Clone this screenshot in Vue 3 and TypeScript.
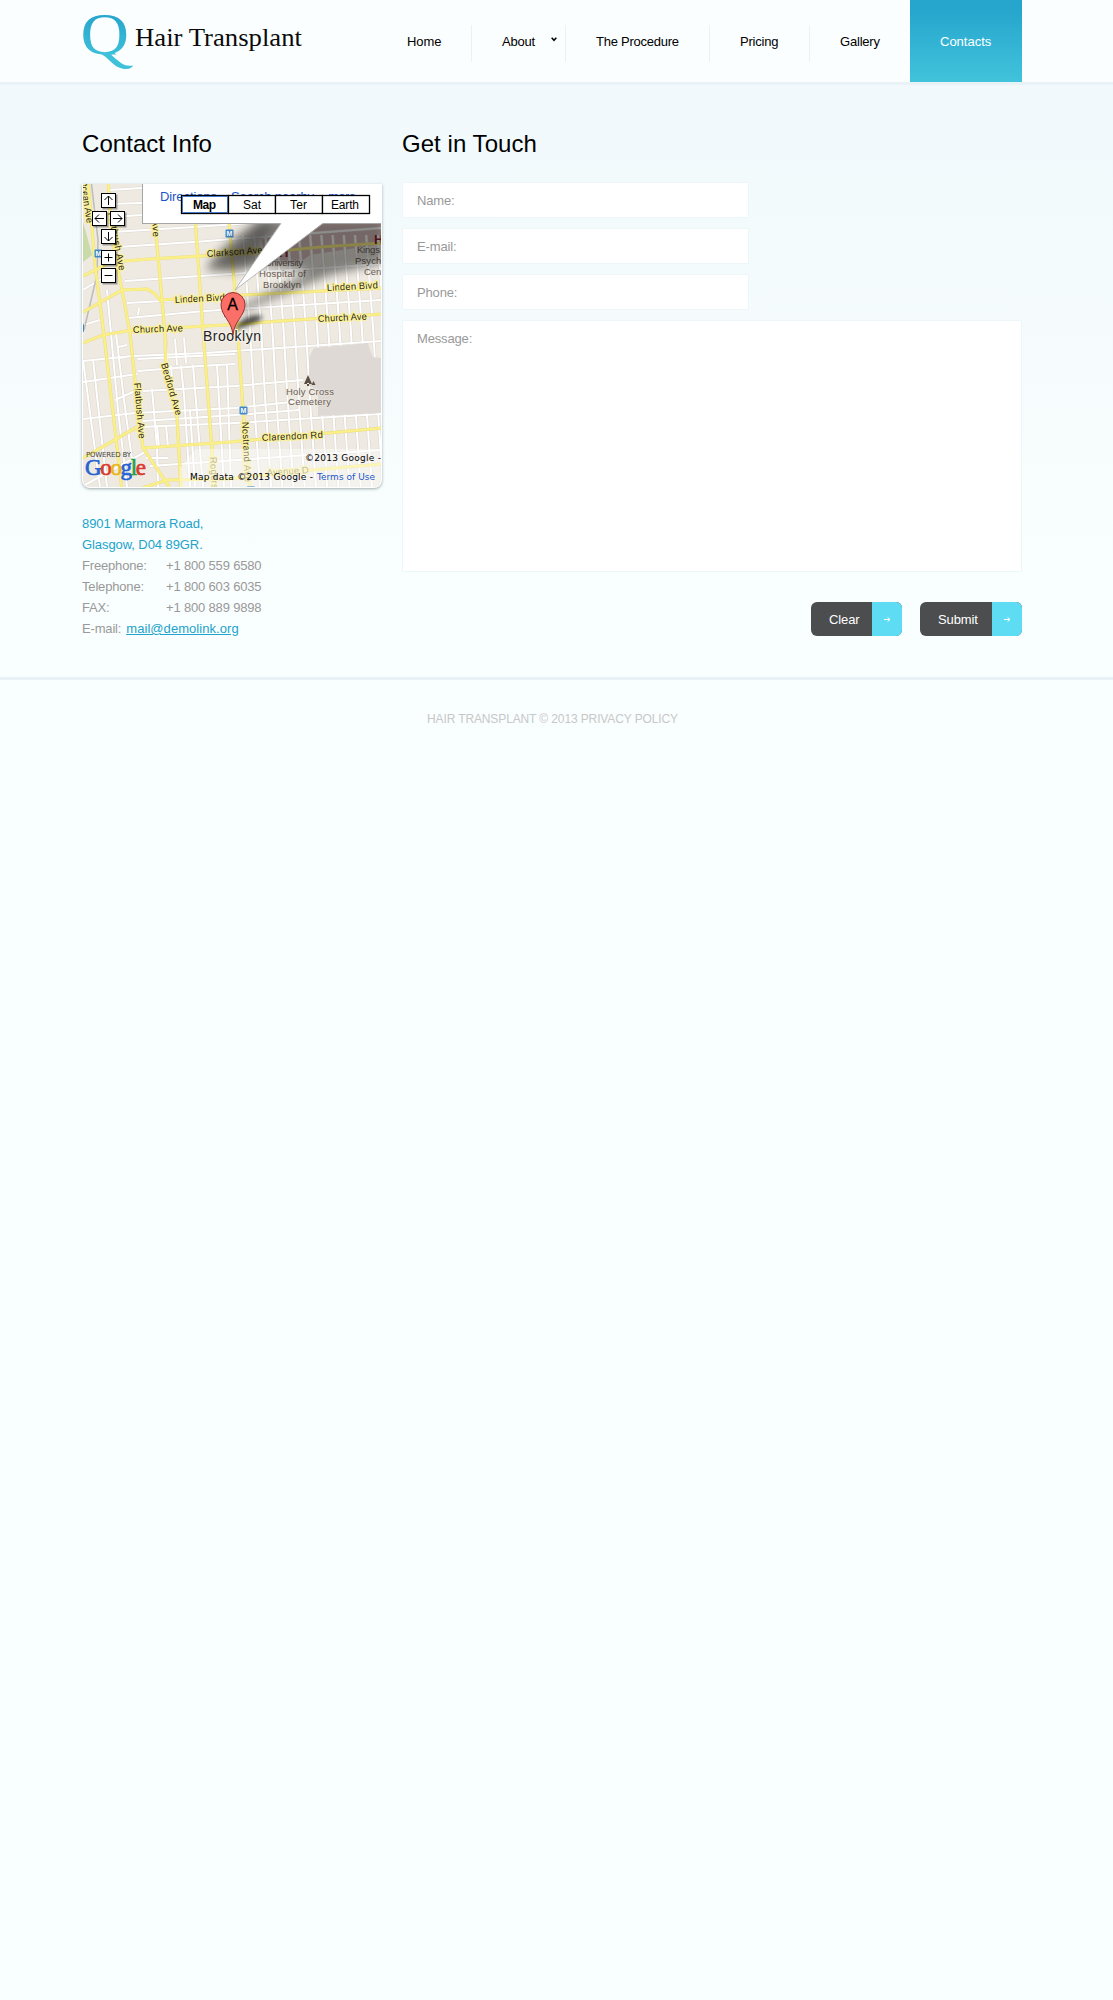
<script setup lang="ts">
interface NavItem { label: string; cls: string; arrow?: boolean }
interface Road { d: string }
interface Label { t: string; x: number; y: number; w: number; r?: number; cls?: string }

const nav: NavItem[] = [
  { label: 'Home', cls: 'home' },
  { label: 'About', cls: 'about', arrow: true },
  { label: 'The Procedure', cls: 'procedure' },
  { label: 'Pricing', cls: 'pricing' },
  { label: 'Gallery', cls: 'gallery' },
  { label: 'Contacts', cls: 'contacts' },
]
const phones = [
  ['Freephone:', '+1 800 559 6580'],
  ['Telephone:', '+1 800 603 6035'],
  ['FAX:', '+1 800 889 9898'],
]
const fields = ['Name:', 'E-mail:', 'Phone:']

const mainRoads: Road[] = [
  { d: 'M88 180L95 265L104 335L122 490' },
  { d: 'M108 180L112 240L122 290L130 333L137 400L143 448L170 488' },
  { d: 'M153 200L157 245L162 300L165 335L166 373L177 417L181 488' },
  { d: 'M193 188L203 330L213 463L215 490' },
  { d: 'M226 190L229 222L235 292L239 350L243 410L250 488' },
  { d: 'M83 276L112 262L150 259L270 252L320 247L382 243' },
  { d: 'M83 312L122 290L147 289L154 293L160 300L225 296L382 288' },
  { d: 'M83 343L103 335L133 330L225 325L382 314' },
  { d: 'M143 448L230 442L382 428' },
  { d: 'M83 458L137 427' },
  { d: 'M142 488L167 480L228 479L300 471L382 464' },
]
const sideRoads: Road[] = [
  'M108 190L142 188', 'M108 204L142 203', 'M112 217L142 215', 'M112 232L194 227L381 214', 'M118 247L194 242L381 228',
  'M125 281L200 276L381 264', 'M128 318L205 311L381 300', 'M127 303L200 299', 'M83 361L132 356L205 353L381 341',
  'M83 382L137 374', 'M138 359L235 354', 'M138 371L200 366L235 364', 'M115 400L135 391', 'M143 391L235 386L303 380',
  'M83 419L135 413L235 408L310 400', 'M143 421L235 415L300 410', 'M140 427L235 423L381 414', 'M83 486L145 452',
  'M146 458H168', 'M150 466L381 450', 'M83 290L108 275', 'M83 325L100 320',
  'M93 359L107 487', 'M83 360L95 450L100 487', 'M107 290L118 410L127 487', 'M116 333L124 400L132 460',
  'M118 347L127 345', 'M120 358L127 357', 'M139 308L138 315', 'M152 389L157 447L158 487', 'M166 340L167 366',
  'M175 339L177 365', 'M184 338L186 363', 'M171 366L173 391', 'M181 366L184 395L190 487', 'M190 410L195 487',
  'M157 425L159 447', 'M166 425L168 447', 'M193 365L203 487', 'M217 365L224 487', 'M227 365L231 487',
].map(d => ({ d }))
// Parallel blocks east of Nostrand Avenue
const eastRoads: Road[] = Array.from({ length: 13 }, (_, i) => {
  const x = 250 + i * 11.2
  return { d: `M${x - 7} 235L${x} 330L${x + 4} 400L${x + 10} 488` }
})
const labels: Label[] = [
  { t: 'Clarkson Ave', x: 207, y: 257, w: 56, r: -4 },
  { t: 'Linden Blvd', x: 175, y: 303, w: 50, r: -3 },
  { t: 'Linden Blvd', x: 327, y: 291, w: 51, r: -3 },
  { t: 'Church Ave', x: 133, y: 333, w: 50, r: -2 },
  { t: 'Church Ave', x: 318, y: 322, w: 49, r: -3 },
  { t: 'Clarendon Rd', x: 262, y: 441, w: 61, r: -3 },
  { t: 'Avenue D', x: 267, y: 476, w: 42, r: -4, cls: 'faded' },
  { t: 'Bedford Ave', x: 161, y: 364, w: 54, r: 74 },
  { t: 'Flatbush Ave', x: 134, y: 383, w: 56, r: 85 },
  { t: 'Nostrand', x: 242, y: 422, w: 40, r: 87 },
  { t: 'Ave', x: 244, y: 465, w: 17, r: 87, cls: 'faded' },
  { t: 'Rogers', x: 210, y: 457, w: 32, r: 87, cls: 'faded' },
  { t: 'Ave', x: 152, y: 220, w: 17, r: 86 },
  { t: 'Flatbush Ave', x: 108, y: 213, w: 59, r: 79 },
  { t: 'Ocean Ave', x: 80, y: 180, w: 44, r: 81 },
]
const places: Label[] = [
  { t: 'University', x: 265, y: 266, w: 38 }, { t: 'Hospital of', x: 259, y: 277, w: 47 }, { t: 'Brooklyn', x: 263, y: 288, w: 38 },
  { t: 'Kings C', x: 357, y: 253, w: 32 }, { t: 'Psychia', x: 355, y: 264, w: 34 }, { t: 'Cente', x: 364, y: 275, w: 25 },
  { t: 'Holy Cross', x: 286, y: 395, w: 48 }, { t: 'Cemetery', x: 288, y: 405, w: 43 },
]
const metros = [[225.500, 229.500], [239.500, 406.500], [94.500, 249.500], [76, 324], [224, 309], [247, 486]]
const types = [
  { t: 'Map', x: 181, w: 47, tx: 193, tw: 23 }, { t: 'Sat', x: 228, w: 47, tx: 243, tw: 18 },
  { t: 'Ter', x: 275, w: 47, tx: 290, tw: 17 }, { t: 'Earth', x: 322, w: 47, tx: 331, tw: 28 },
]
const controls = [
  { x: 101, y: 193, d: 'M8 12.5V3.5M4 7.5L8 3.5L12 7.5' },
  { x: 92, y: 211, d: 'M12.5 8H3.5M7.5 4L3.5 8L7.5 12' },
  { x: 110, y: 211, d: 'M3.5 8H12.5M8.5 4L12.5 8L8.5 12' },
  { x: 101, y: 229, d: 'M8 3.5V12.5M4 8.5L8 12.5L12 8.5' },
  { x: 101, y: 250, d: 'M8 4V12M4 8H12' },
  { x: 101, y: 268, d: 'M4 8H12' },
]
</script>

<template>
  <div class="page">
    <header class="header">
      <div class="wrap bar">
        <svg class="logo" width="225" height="72" viewBox="82 0 225 72">
          <defs>
            <linearGradient id="lg" gradientUnits="userSpaceOnUse" x1="0" y1="-40" x2="0" y2="15">
              <stop offset="0" stop-color="#27a5cc" /><stop offset="1" stop-color="#43c8dd" />
            </linearGradient>
            <clipPath id="bowl"><rect x="80" y="10" width="60" height="44.5" /></clipPath>
          </defs>
          <g clip-path="url(#bowl)"><text class="mark" transform="translate(80.6 54) scale(1.12 1)" x="0" y="0" fill="url(#lg)">Q</text></g>
          <path fill="#3fc1da" d="M97 53C103 54 106 57 110 61C116 67 121 69 126 69C130 69 132 67.500 133 65.500C129 66 125 66 121 63C116 59 113 57 110 53Z" />
          <text class="brand" x="135" y="46" textLength="167" lengthAdjust="spacingAndGlyphs">Hair Transplant</text>
        </svg>
        <nav class="nav">
          <a v-for="n in nav" :key="n.label" :class="['item', n.cls]">
            <span>{{ n.label }}</span>
            <svg v-if="n.arrow" class="caret" width="6" height="5" viewBox="0 0 6 5"><path d="M.7 .8L3 3.300L5.300 .8" fill="none" stroke="#000" stroke-width="1.6" /></svg>
          </a>
        </nav>
      </div>
    </header>

    <main class="wrap main">
      <section class="info">
        <h2>Contact Info</h2>
        <div class="map">
          <svg width="298" height="303" viewBox="83 184 298 303">
            <defs>
              <filter id="soft" x="-30%" y="-30%" width="160%" height="160%"><feGaussianBlur stdDeviation="5" /></filter>
              <filter id="soft2" x="-30%" y="-30%" width="160%" height="160%"><feGaussianBlur stdDeviation="2.500" /></filter>
            </defs>
            <rect x="83" y="184" width="298" height="303" fill="#eeeae2" />
            <path d="M83 222L87 236L92 255L83 262Z" fill="#c8dba9" />
            <path d="M300 222H381V244L310 255L300 262L265 262L262 240Z" fill="#d5bcb8" />
            <g class="side">
              <path v-for="r in sideRoads" :key="r.d" :d="r.d" />
              <path v-for="r in eastRoads" :key="r.d" :d="r.d" />
            </g>
            <g class="side top">
              <path v-for="r in sideRoads" :key="r.d" :d="r.d" />
              <path v-for="r in eastRoads" :key="r.d" :d="r.d" />
            </g>
            <path d="M91 180L98 240L97 275L84 330" fill="none" stroke="#bbb" stroke-width="1.500" />
            <path d="M314 348L368 343L370 350L373 357L381 358V413L318 416V390L309 386L309 357Z" fill="#ded9d4" />
            <g class="edge"><path v-for="r in mainRoads" :key="r.d" :d="r.d" /></g>
            <g class="yellow"><path v-for="r in mainRoads" :key="r.d" :d="r.d" /></g>

            <text
              v-for="(l, i) in labels" :key="i" :class="['street', l.cls]"
              :transform="`translate(${l.x} ${l.y}) rotate(${l.r})`" :textLength="l.w"
            >{{ l.t }}</text>
            <text v-for="p in places" :key="p.t" class="place" :x="p.x" :y="p.y" :textLength="p.w">{{ p.t }}</text>
            <text class="hosp" x="374" y="244">H</text>
            <text class="hosp" x="279" y="257">H</text>
            <path d="M308 375L304 384H312ZM307 383H309V386H307ZM313.500 381L311.500 385H315.500Z" fill="#5c4f44" />
            <g v-for="(m, i) in metros" :key="i">
              <rect :x="m[0]" :y="m[1]" width="8" height="8" rx="1" fill="#4187c8" />
              <text class="metro" :x="m[0] + 1" :y="m[1] + 6.800">M</text>
            </g>

            <path d="M206 270C212 254 240 232 262 218H385V262L330 275L250 308L244 312L238 308L310 272L262 265L235 272Z" fill="#000" opacity=".45" filter="url(#soft)" />
            <path d="M215 266L260 224L275 224L252 262Z" fill="#000" opacity=".28" filter="url(#soft)" />
            <path d="M234 331C238 320 252 313 262 316C264 322 248 324 234 331Z" fill="#000" opacity=".7" filter="url(#soft2)" />

            <rect x="142.500" y="180" width="250" height="43.500" fill="#fff" stroke="#a5a5a5" />
            <path d="M281 223L235 290L323 223Z" fill="#fff" />
            <path d="M281 223.500L235 290L323 223.500" fill="none" stroke="#aaa" stroke-width=".8" />
            <g class="links">
              <text x="160" y="201" textLength="57">Directions</text>
              <text x="231" y="201" textLength="83">Search nearby</text>
              <text x="328" y="201" textLength="28">more</text>
            </g>

            <text class="city" x="203" y="341" textLength="58">Brooklyn</text>
            <path d="M233 335C232 321 221 316 221 304.500A12 12 0 0 1 245 304.500C245 316 234 321 233 335Z" fill="#fb6f69" stroke="#8d2722" stroke-width=".9" />
            <text class="pin" x="227.300" y="310">A</text>

            <g v-for="b in types" :key="b.t">
              <rect :x="b.x + .5" y="195.500" :width="b.w" height="18" fill="#fff" stroke="#000" stroke-width="1.300" />
              <rect v-if="b.t === 'Map'" :x="b.x + 1.500" y="196.500" :width="b.w - 2" height="16" fill="none" stroke="#4a7bc6" />
              <text :class="['type', { on: b.t === 'Map' }]" :x="b.tx" y="209" :textLength="b.tw">{{ b.t }}</text>
            </g>

            <g v-for="c in controls" :key="c.y + c.d" :transform="`translate(${c.x} ${c.y})`">
              <rect x="1.500" y="1.500" width="15" height="15" fill="#000" opacity=".35" />
              <rect x=".5" y=".5" width="14" height="14" fill="#fff" stroke="#000" />
              <path :d="c.d" transform="translate(-.5 -.5)" fill="none" stroke="#000" />
            </g>

            <path d="M196 449H381V487H180V468Z" fill="#fff" opacity=".42" />
            <text class="powered" x="86" y="457" textLength="45">POWERED BY</text>
            <text class="google" x="85" y="475" textLength="61"><tspan class="b">G</tspan><tspan class="r">o</tspan><tspan class="y">o</tspan><tspan class="b">g</tspan><tspan class="g">l</tspan><tspan class="r">e</tspan></text>
            <text class="copy" x="305" y="461" textLength="76">©2013 Google -</text>
            <text class="copy" x="190" y="480" textLength="123">Map data ©2013 Google -</text>
            <text class="copy terms" x="317" y="480" textLength="58">Terms of Use</text>
          </svg>
        </div>
        <address>
          <div class="blue a1">8901 Marmora Road,</div>
          <div class="blue a2">Glasgow, D04 89GR.</div>
          <div v-for="p in phones" :key="p[0]" class="row"><span class="k">{{ p[0] }}</span><span>{{ p[1] }}</span></div>
          <div class="row">E-mail: <a class="blue mail">mail@demolink.org</a></div>
        </address>
      </section>

      <section class="touch">
        <h2>Get in Touch</h2>
        <div v-for="f in fields" :key="f" class="field">{{ f }}</div>
        <div class="field area">Message:</div>
        <div class="actions">
          <a v-for="b in ['Clear', 'Submit']" :key="b" :class="['btn', b.toLowerCase()]">
            <span class="cap">{{ b }}</span>
            <span class="arr"><svg width="7" height="5" viewBox="0 0 7 5"><path d="M0 2.500H6M3.500 .3L6 2.500L3.500 4.700" fill="none" stroke="#fff" /></svg></span>
          </a>
        </div>
      </section>
    </main>

    <footer class="footer"><span>HAIR TRANSPLANT © 2013 PRIVACY POLICY</span></footer>
  </div>
</template>

<style>
body { margin: 0; background: #f9feff; }
</style>

<style scoped>
.page {
  height: 2000px;
  box-sizing: border-box;
  font: 13px/21px "Liberation Sans", Arial, sans-serif;
  color: #999;
  background: linear-gradient(#f1f9fc 85px, #f3fafc 190px, #f9fefe 560px);
}
.wrap { width: 940px; margin: 0 auto 0 82px; }
.header { height: 82px; background: #fafeff; border-bottom: 3px solid #e9f3f7; }
.bar { display: flex; justify-content: space-between; height: 82px; }
.logo { display: block; }
.mark { font: 60px "Liberation Serif", serif; }
.brand { font: 26px "Liberation Serif", serif; fill: #0b0b0b; }
.nav { display: flex; color: #000; letter-spacing: -.2px; }
.item { display: flex; align-items: center; height: 82px; box-sizing: border-box; padding-left: 30px; position: relative; white-space: nowrap; }
.item:not(.gallery):not(.contacts)::after { content: ""; position: absolute; right: 0; top: 25px; width: 1px; height: 37px; background: #edf1f2; }
.home { width: 96px; padding-left: 31px; letter-spacing: -.1px; }
.about { width: 94px; }
.procedure { width: 144px; letter-spacing: -.25px; }
.pricing { width: 100px; }
.gallery { width: 100px; }
.contacts { width: 112px; color: #fff; background: linear-gradient(#26a5cd 10%, #41c3db); letter-spacing: 0; }
.caret { margin: -4px 0 0 16px; }
.main { display: flex; gap: 20px; height: 592px; }
.info { width: 300px; }
.touch { width: 620px; }
h2 { margin: 0; padding-top: 44px; font-size: 24px; line-height: 30px; font-weight: 400; color: #000; letter-spacing: .05px; }
.map { width: 298px; height: 303px; margin-top: 25px; padding: 0 1px 1px; background: #fff; border-radius: 0 0 8px 8px; box-shadow: 0 1px 3px rgba(70, 90, 95, .5); }
.map svg { display: block; border-radius: 0 0 7px 7px; }
.map text { font-family: "Liberation Sans", Arial, sans-serif; }
.side path { fill: none; stroke: #ddd8cf; stroke-width: 3.200; }
.side.top path { stroke: #fff; stroke-width: 2; }
.edge path { fill: none; stroke: #eadc85; stroke-width: 3.200; }
.yellow path { fill: none; stroke: #fbf087; stroke-width: 2.300; }
.map .street { font-size: 9.500px; fill: #2c2818; stroke: #faf09b; stroke-width: 2.500px; paint-order: stroke; }
.map .faded { fill: #8d8967; }
.place { font-size: 9.500px; fill: #6a5c55; stroke: #eeeae2; stroke-width: 1.500px; stroke-opacity: .5; paint-order: stroke; }
.hosp { font-size: 13px; font-weight: 700; fill: #8c2230; }
.metro { font-size: 7px; font-weight: 700; fill: #fff; }
.links { font-size: 13px; fill: #1c55c8; }
.city { font-size: 14px; fill: #222; stroke: #f4f1ea; stroke-width: 2px; paint-order: stroke; }
.pin { font-size: 16px; fill: #000; stroke: #000; stroke-width: .3px; }
.type { font-size: 12px; fill: #000; }
.type.on { font-weight: 700; }
.map .powered { font: 7px "DejaVu Sans", sans-serif; fill: #444; }
.map .google { font: 23px "Liberation Serif", serif; stroke-width: .7px; }
.google .b { fill: #2563d4; stroke: #2563d4; }
.google .r { fill: #d93a31; stroke: #d93a31; }
.google .y { fill: #e9b61f; stroke: #e9b61f; }
.google .g { fill: #28a044; stroke: #28a044; }
.map .copy { font: 9px "DejaVu Sans", sans-serif; fill: #000; }
.map .terms { fill: #1c55c8; }
address { font-style: normal; margin-top: 25px; letter-spacing: -.17px; }
address > div { height: 21px; white-space: nowrap; }
.blue { color: #22a3cb; }
.a1, .a2 { letter-spacing: -.08px; }
.row { display: flex; }
.k { width: 84px; }
.mail { margin-left: 5px; text-decoration: underline; letter-spacing: .06px; }
.field { width: 347px; height: 36px; margin-bottom: 10px; box-sizing: border-box; padding: 7px 14px; border: 1px solid #edf7f9; background: #fff; letter-spacing: -.15px; }
.touch h2 + .field { margin-top: 23px; }
.area { width: 620px; height: 252px; margin-bottom: 30px; }
.actions { display: flex; justify-content: flex-end; gap: 18px; }
.btn { display: flex; height: 34px; border-radius: 6px; overflow: hidden; color: #fff; line-height: 35px; background: #4c4d4e; }
.cap { width: 61px; padding-left: 18px; box-sizing: border-box; letter-spacing: -.1px; }
.submit .cap { width: 72px; }
.arr { width: 30px; display: flex; align-items: center; justify-content: center; background: #5edcf3; }
.footer { height: 1323px; border-top: 3px solid #e9f3f7; box-sizing: border-box; background: #f9fefe; font-size: 12px; color: #c8c8c8; }
.footer span { display: block; padding: 29px 0 0 427px; letter-spacing: -.12px; }
</style>
